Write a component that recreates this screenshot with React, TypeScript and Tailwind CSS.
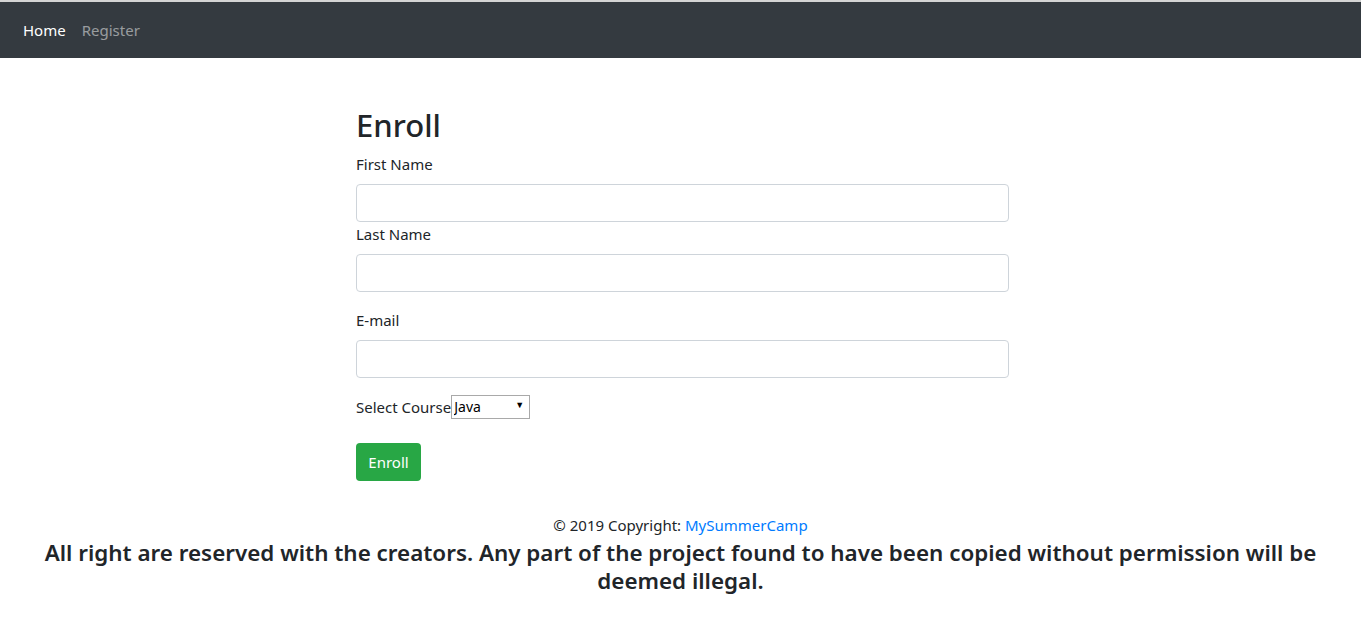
import { useState } from "react";

type FieldProps = {
    label: string;
    id: string;
    className?: string;
};

function Field({ label, id, className = "" }: FieldProps) {
    return (
        <div className={className}>
            <label htmlFor={id} className="mb-2 block text-[15px] leading-6">
                {label}
            </label>
            <input
                id={id}
                type="text"
                className="block h-[38px] w-full rounded border border-[#ced4da] bg-white px-3 outline-none"
            />
        </div>
    );
}

export default function App() {
    const [course, setCourse] = useState("Java");

    return (
        <div className="min-h-screen bg-white text-[#212529]" style={{ fontFamily: '"Noto Sans", "Open Sans", sans-serif' }}>
            <div className="h-[2px] bg-[#d4d4d4]" />
            <nav className="flex h-[56px] items-center bg-[#343a40] px-[23px]">
                <a href="#" className="text-[15px] leading-6 text-white">
                    Home
                </a>
                <a href="#" className="ml-4 text-[15px] leading-6 text-white/50">
                    Register
                </a>
            </nav>

            <main className="ml-[356px] w-[653px] pt-[48px]">
                <h2 className="mb-2 text-[31px] leading-[38px] font-medium">Enroll</h2>
                <Field label="First Name" id="first" />
                <Field label="Last Name" id="last" className="mb-4" />
                <Field label="E-mail" id="email" className="mb-4" />

                <div className="flex h-[25px] items-center">
                    <span className="text-[15px] leading-6">Select Course</span>
                    <div className="relative">
                        <select
                            value={course}
                            onChange={(e) => setCourse(e.target.value)}
                            className="h-6 w-[79px] appearance-none rounded-none border border-[#a9a9a9] bg-white pl-[2px] text-[14px] leading-5 text-black outline-none"
                        >
                            <option>Java</option>
                            <option>Python</option>
                            <option>C++</option>
                        </select>
                        <span className="pointer-events-none absolute top-[6px] right-[6px] text-[9px] leading-[10px] text-black">▼</span>
                    </div>
                </div>

                <button className="mt-6 h-[38px] w-[65px] rounded bg-[#28a745] text-[15px] text-white">Enroll</button>
            </main>

            <footer className="mt-8 text-center">
                <p className="text-[15px] leading-6">
                    © 2019 Copyright: <a href="#" className="text-[#007bff]">MySummerCamp</a>
                </p>
                <h4 className="mx-auto mt-[2px] max-w-[1300px] text-[22.4px] leading-[28px] font-semibold">
                    All right are reserved with the creators. Any part of the project found to have been copied without permission will be deemed illegal.
                </h4>
            </footer>
        </div>
    );
}
